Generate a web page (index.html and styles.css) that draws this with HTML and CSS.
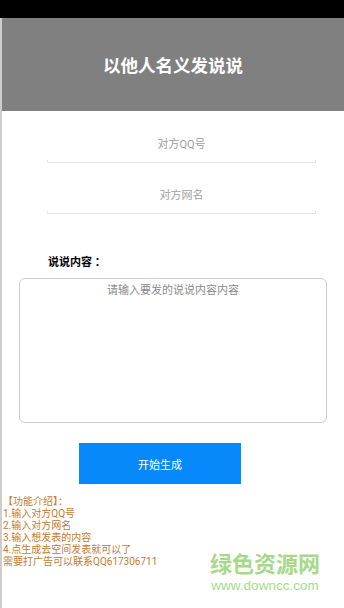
FILE: index.html
```html
<!DOCTYPE html>
<html lang="zh-CN">
<head>
    <meta charset="UTF-8">
    <meta name="viewport" content="width=device-width, initial-scale=1.0">
    <title>以他人名义发说说</title>
    <link rel="stylesheet" href="styles.css">
</head>
<body>

<div class="status-bar"></div>

<div class="app">
    <div class="app-header">以他人名义发说说</div>

    <div class="field">
        <input type="text" placeholder="对方QQ号">
    </div>
    <div class="field">
        <input type="text" placeholder="对方网名">
    </div>

    <div class="content-label">说说内容 ：</div>
    <textarea class="content-box" placeholder="请输入要发的说说内容内容"></textarea>

    <button class="make-btn">开始生成</button>

    <div class="intro">
        <div>【功能介绍】：</div>
        <div>1.输入对方QQ号</div>
        <div>2.输入对方网名</div>
        <div>3.输入想发表的内容</div>
        <div>4.点生成去空间发表就可以了</div>
        <div>需要打广告可以联系QQ617306711</div>
    </div>

    <div class="watermark">
        <div class="wm-name">绿色资源网</div>
        <div class="wm-url">www.downcc.com</div>
    </div>
</div>

</body>
</html>
```

FILE: styles.css
```css
body {
    margin: 0;
    width: 344px;
    height: 608px;
    overflow: hidden;
    background: #fff;
    font-family: Roboto, "Noto Sans CJK SC", sans-serif;
}
.status-bar {
    height: 18px;
    background: #000;
}
.app {
    position: relative;
    height: 590px;
    border-left: 2px solid #cdcdcd;
}
.app-header {
    height: 93px;
    background: #808080;
    color: #fff;
    font-size: 17.5px;
    font-weight: bold;
    display: flex;
    align-items: center;
    justify-content: center;
}
.field {
    width: 269px;
    height: 36px;
    margin: 16px 0 0 45px;
    background:
        linear-gradient(#e4e4e4, #e4e4e4) left bottom / 100% 1px no-repeat,
        linear-gradient(#e4e4e4, #e4e4e4) left bottom / 1px 3px no-repeat,
        linear-gradient(#e4e4e4, #e4e4e4) right bottom / 1px 3px no-repeat;
}
.field + .field {
    margin-top: 15px;
}
.field input {
    width: 100%;
    height: 35px;
    border: none;
    outline: none;
    background: transparent;
    padding: 0;
    text-align: center;
    font-family: inherit;
    font-size: 11px;
    color: #333;
}
.field input::placeholder {
    color: #a0a0a0;
}
.content-label {
    margin: 42px 0 0 46px;
    font-size: 11px;
    font-weight: bold;
    line-height: 14px;
    color: #000;
}
.content-box {
    display: block;
    box-sizing: border-box;
    width: 308px;
    height: 145px;
    margin: 8px 0 0 17px;
    padding: 5px 8px;
    border: 1px solid #cccccc;
    border-radius: 6px;
    resize: none;
    outline: none;
    text-align: center;
    font-family: inherit;
    font-size: 11px;
    line-height: 14px;
}
.content-box::placeholder {
    color: #8a8a8a;
}
.make-btn {
    display: block;
    width: 162px;
    height: 41px;
    margin: 20px 0 0 77px;
    border: none;
    background: #0789fb;
    color: #fff;
    font-family: inherit;
    font-size: 11px;
    cursor: pointer;
}
.intro {
    margin: 12px 0 0 1px;
    font-size: 10px;
    line-height: 12px;
    color: #c47a2c;
}
.watermark {
    position: absolute;
    left: 208px;
    top: 534px;
    color: #a6d98a;
    text-align: center;
}
.wm-name {
    font-size: 22px;
    font-weight: bold;
    line-height: 26px;
}
.wm-url {
    font-family: "Liberation Sans", Arial, sans-serif;
    font-size: 13.5px;
    line-height: 16px;
}
```
